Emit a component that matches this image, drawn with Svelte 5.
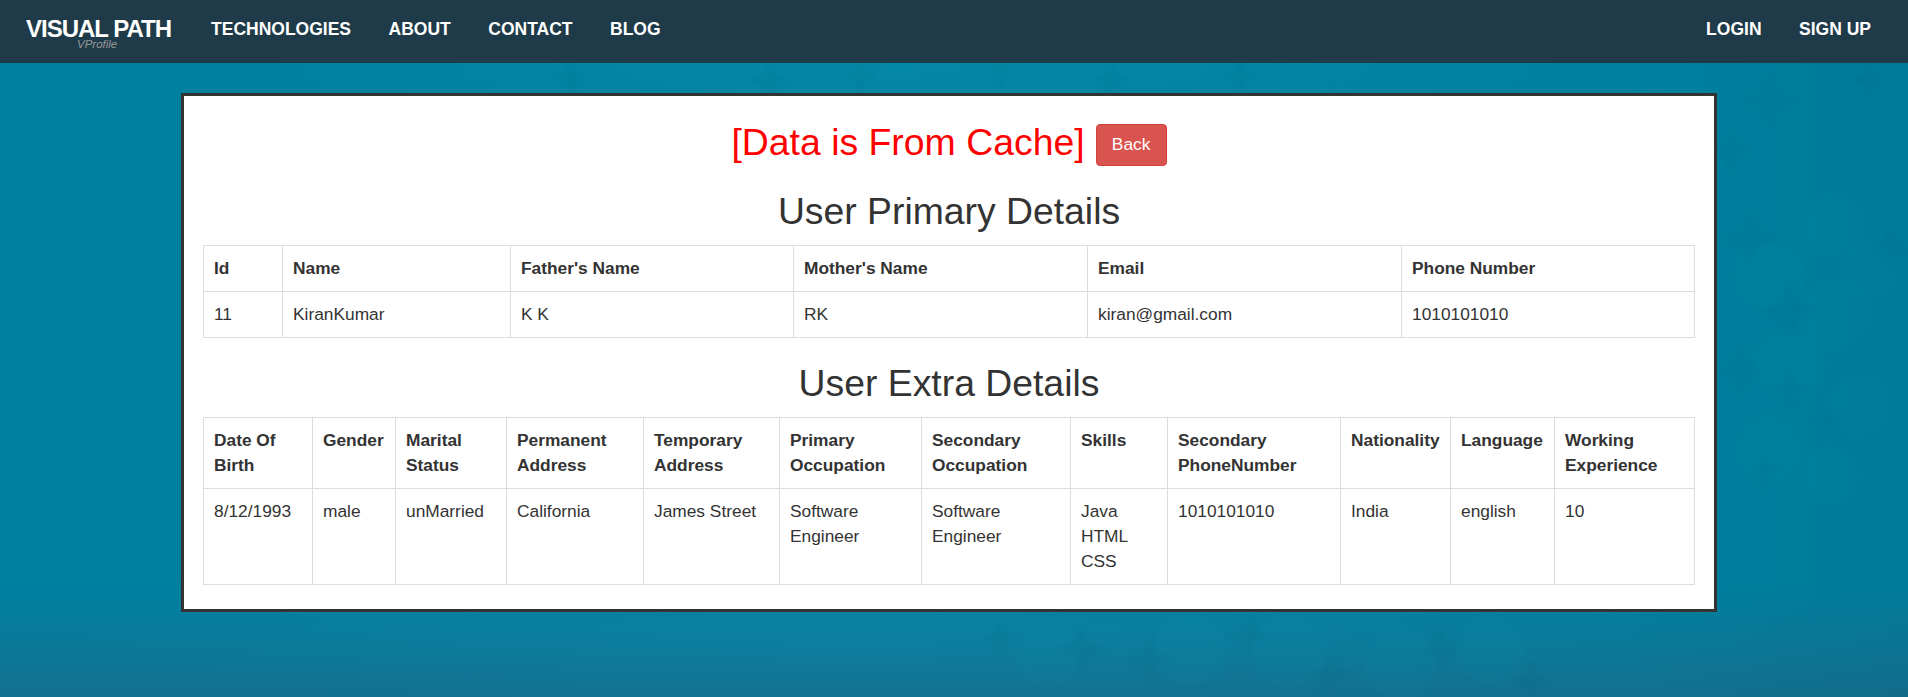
<script>
  const primaryCols = ['Id', 'Name', "Father's Name", "Mother's Name", 'Email', 'Phone Number'];
  const primaryWidths = [79, 228, 283, 294, 314, 293];
  const primaryRow = ['11', 'KiranKumar', 'K K', 'RK', 'kiran@gmail.com', '1010101010'];

  const extraCols = ['Date Of Birth', 'Gender', 'Marital Status', 'Permanent Address', 'Temporary Address', 'Primary Occupation', 'Secondary Occupation', 'Skills', 'Secondary PhoneNumber', 'Nationality', 'Language', 'Working Experience'];
  const extraWidths = [109, 83, 111, 137, 136, 142, 149, 97, 173, 110, 104, 140];
  const extraRow = ['8/12/1993', 'male', 'unMarried', 'California', 'James Street', 'Software Engineer', 'Software Engineer', 'Java\nHTML\nCSS', '1010101010', 'India', 'english', '10'];

  // faint texture behind the card: dark four-point gaps between lighter discs
  const gaps = [
    [570, 78, 16], [770, 80, 20], [860, 76, 18], [1000, 72, 16], [1110, 80, 18], [1240, 78, 16],
    [1770, 100, 26], [1730, 150, 22], [1870, 80, 20], [1750, 240, 28], [1790, 310, 30], [1890, 250, 24],
    [1740, 370, 26], [1790, 390, 20], [1765, 470, 18], [1830, 420, 16],
    [1000, 640, 18], [1080, 650, 24], [1150, 660, 26], [1250, 635, 22], [1330, 675, 24], [1440, 650, 22], [1530, 680, 20]
  ];
  const discs = [
    [1770, 275, 35], [1835, 225, 32], [1835, 315, 35], [1870, 270, 28], [1790, 365, 36],
    [1860, 405, 32], [1770, 450, 33], [1830, 475, 30], [1050, 655, 32], [1190, 650, 36],
    [1290, 650, 38], [1400, 665, 36], [1490, 650, 34], [900, 80, 24], [1300, 84, 26]
  ];

  function gapPoints(x, y, r) {
    const pts = [];
    for (let i = 0; i < 8; i++) {
      const a = (i * Math.PI) / 4;
      const d = i % 2 ? r * 0.4 : r;
      pts.push(`${(x + d * Math.cos(a)).toFixed(1)},${(y + d * Math.sin(a)).toFixed(1)}`);
    }
    return pts.join(' ');
  }
</script>

<div class="page">
  <svg class="texture" width="1908" height="697" aria-hidden="true">
    {#each discs as [x, y, r]}
      <circle cx={x} cy={y} {r} fill="#0b93b5" opacity="0.08" />
    {/each}
    {#each gaps as [x, y, r]}
      <polygon points={gapPoints(x, y, r)} fill="#06506a" opacity="0.07" />
    {/each}
  </svg>

  <nav class="navbar">
    <a class="brand" href="#top">VISUAL PATH<small>VProfile</small></a>
    <ul class="links">
      <li>Technologies</li>
      <li>About</li>
      <li>Contact</li>
      <li>Blog</li>
    </ul>
    <ul class="links right">
      <li>Login</li>
      <li>Sign Up</li>
    </ul>
  </nav>

  <main class="card">
    <div class="title">
      <h2>[Data is From Cache]</h2>
      <button class="back">Back</button>
    </div>

    <h3>User Primary Details</h3>
    <table>
      <colgroup>
        {#each primaryWidths as w}<col style="width: {w}px" />{/each}
      </colgroup>
      <thead>
        <tr>{#each primaryCols as c}<th>{c}</th>{/each}</tr>
      </thead>
      <tbody>
        <tr>{#each primaryRow as v}<td>{v}</td>{/each}</tr>
      </tbody>
    </table>

    <h3>User Extra Details</h3>
    <table>
      <colgroup>
        {#each extraWidths as w}<col style="width: {w}px" />{/each}
      </colgroup>
      <thead>
        <tr>{#each extraCols as c}<th>{c}</th>{/each}</tr>
      </thead>
      <tbody>
        <tr>{#each extraRow as v}<td class="pre">{v}</td>{/each}</tr>
      </tbody>
    </table>
  </main>
</div>

<style>
  :global(body) {
    margin: 0;
    font-family: "Liberation Sans", Arial, sans-serif;
  }

  .page {
    position: relative;
    height: 697px;
    overflow: hidden;
    background:
      radial-gradient(ellipse 800px 90px at 45% 625px, rgba(20, 140, 175, 0.3), rgba(20, 140, 175, 0) 100%),
      radial-gradient(ellipse 700px 60px at 48% 70px, rgba(10, 145, 175, 0.45), rgba(10, 145, 175, 0) 100%),
      linear-gradient(90deg, rgba(0, 0, 0, 0) 85%, rgba(0, 50, 70, 0.07) 100%),
      linear-gradient(180deg, #00809f 0%, #00809f 84%, #0a7a99 92%, #14708f 100%);
  }

  .texture {
    position: absolute;
    left: 0;
    top: 0;
    filter: blur(2px);
  }

  .navbar {
    position: relative;
    height: 63px;
    background: #1f3b49;
    display: flex;
    align-items: center;
    padding: 0 37px 4px 26px;
    box-sizing: border-box;
  }

  .brand {
    position: relative;
    color: #fff;
    font-size: 24px;
    font-weight: 700;
    letter-spacing: -1px;
    text-decoration: none;
    margin-right: 40px;
    margin-top: -1px;
  }

  .brand small {
    position: absolute;
    left: 51px;
    top: 23px;
    font-size: 11.5px;
    font-style: italic;
    font-weight: 400;
    letter-spacing: 0;
    color: #999;
  }

  .links {
    display: flex;
    gap: 37.5px;
    list-style: none;
    margin: 0;
    padding: 0;
    color: #fff;
    font-size: 17.5px;
    font-weight: 700;
    text-transform: uppercase;
  }

  .links.right {
    margin-left: auto;
  }

  .card {
    position: relative;
    width: 1536px;
    height: 519px;
    box-sizing: border-box;
    margin: 30px 0 0 181px;
    padding: 0 19px;
    background: #fff;
    border: 3px solid #333;
    color: #333;
  }

  .title {
    display: flex;
    justify-content: center;
    align-items: center;
    gap: 11px;
    padding-top: 28px;
    height: 42px;
  }

  h2 {
    margin: 0 0 5px;
    font-size: 37.4px;
    font-weight: 400;
    color: #f00;
  }

  .back {
    width: 71px;
    height: 42px;
    padding: 0 0 2px;
    background: #d9534f;
    border: 1px solid #d43f3a;
    border-radius: 4px;
    color: #fff;
    font: 17.33px "Liberation Sans", Arial, sans-serif;
  }

  h3 {
    margin: 0;
    font-size: 37.33px;
    font-weight: 400;
    text-align: center;
    line-height: 40px;
    padding: 25px 0 14px;
  }

  table {
    table-layout: fixed;
    width: 1491px;
    border-collapse: collapse;
    font-size: 17.33px;
    line-height: 25px;
  }

  th, td {
    border: 1px solid #ddd;
    padding: 10px;
    text-align: left;
    vertical-align: top;
  }

  .pre {
    white-space: pre-line;
  }
</style>
